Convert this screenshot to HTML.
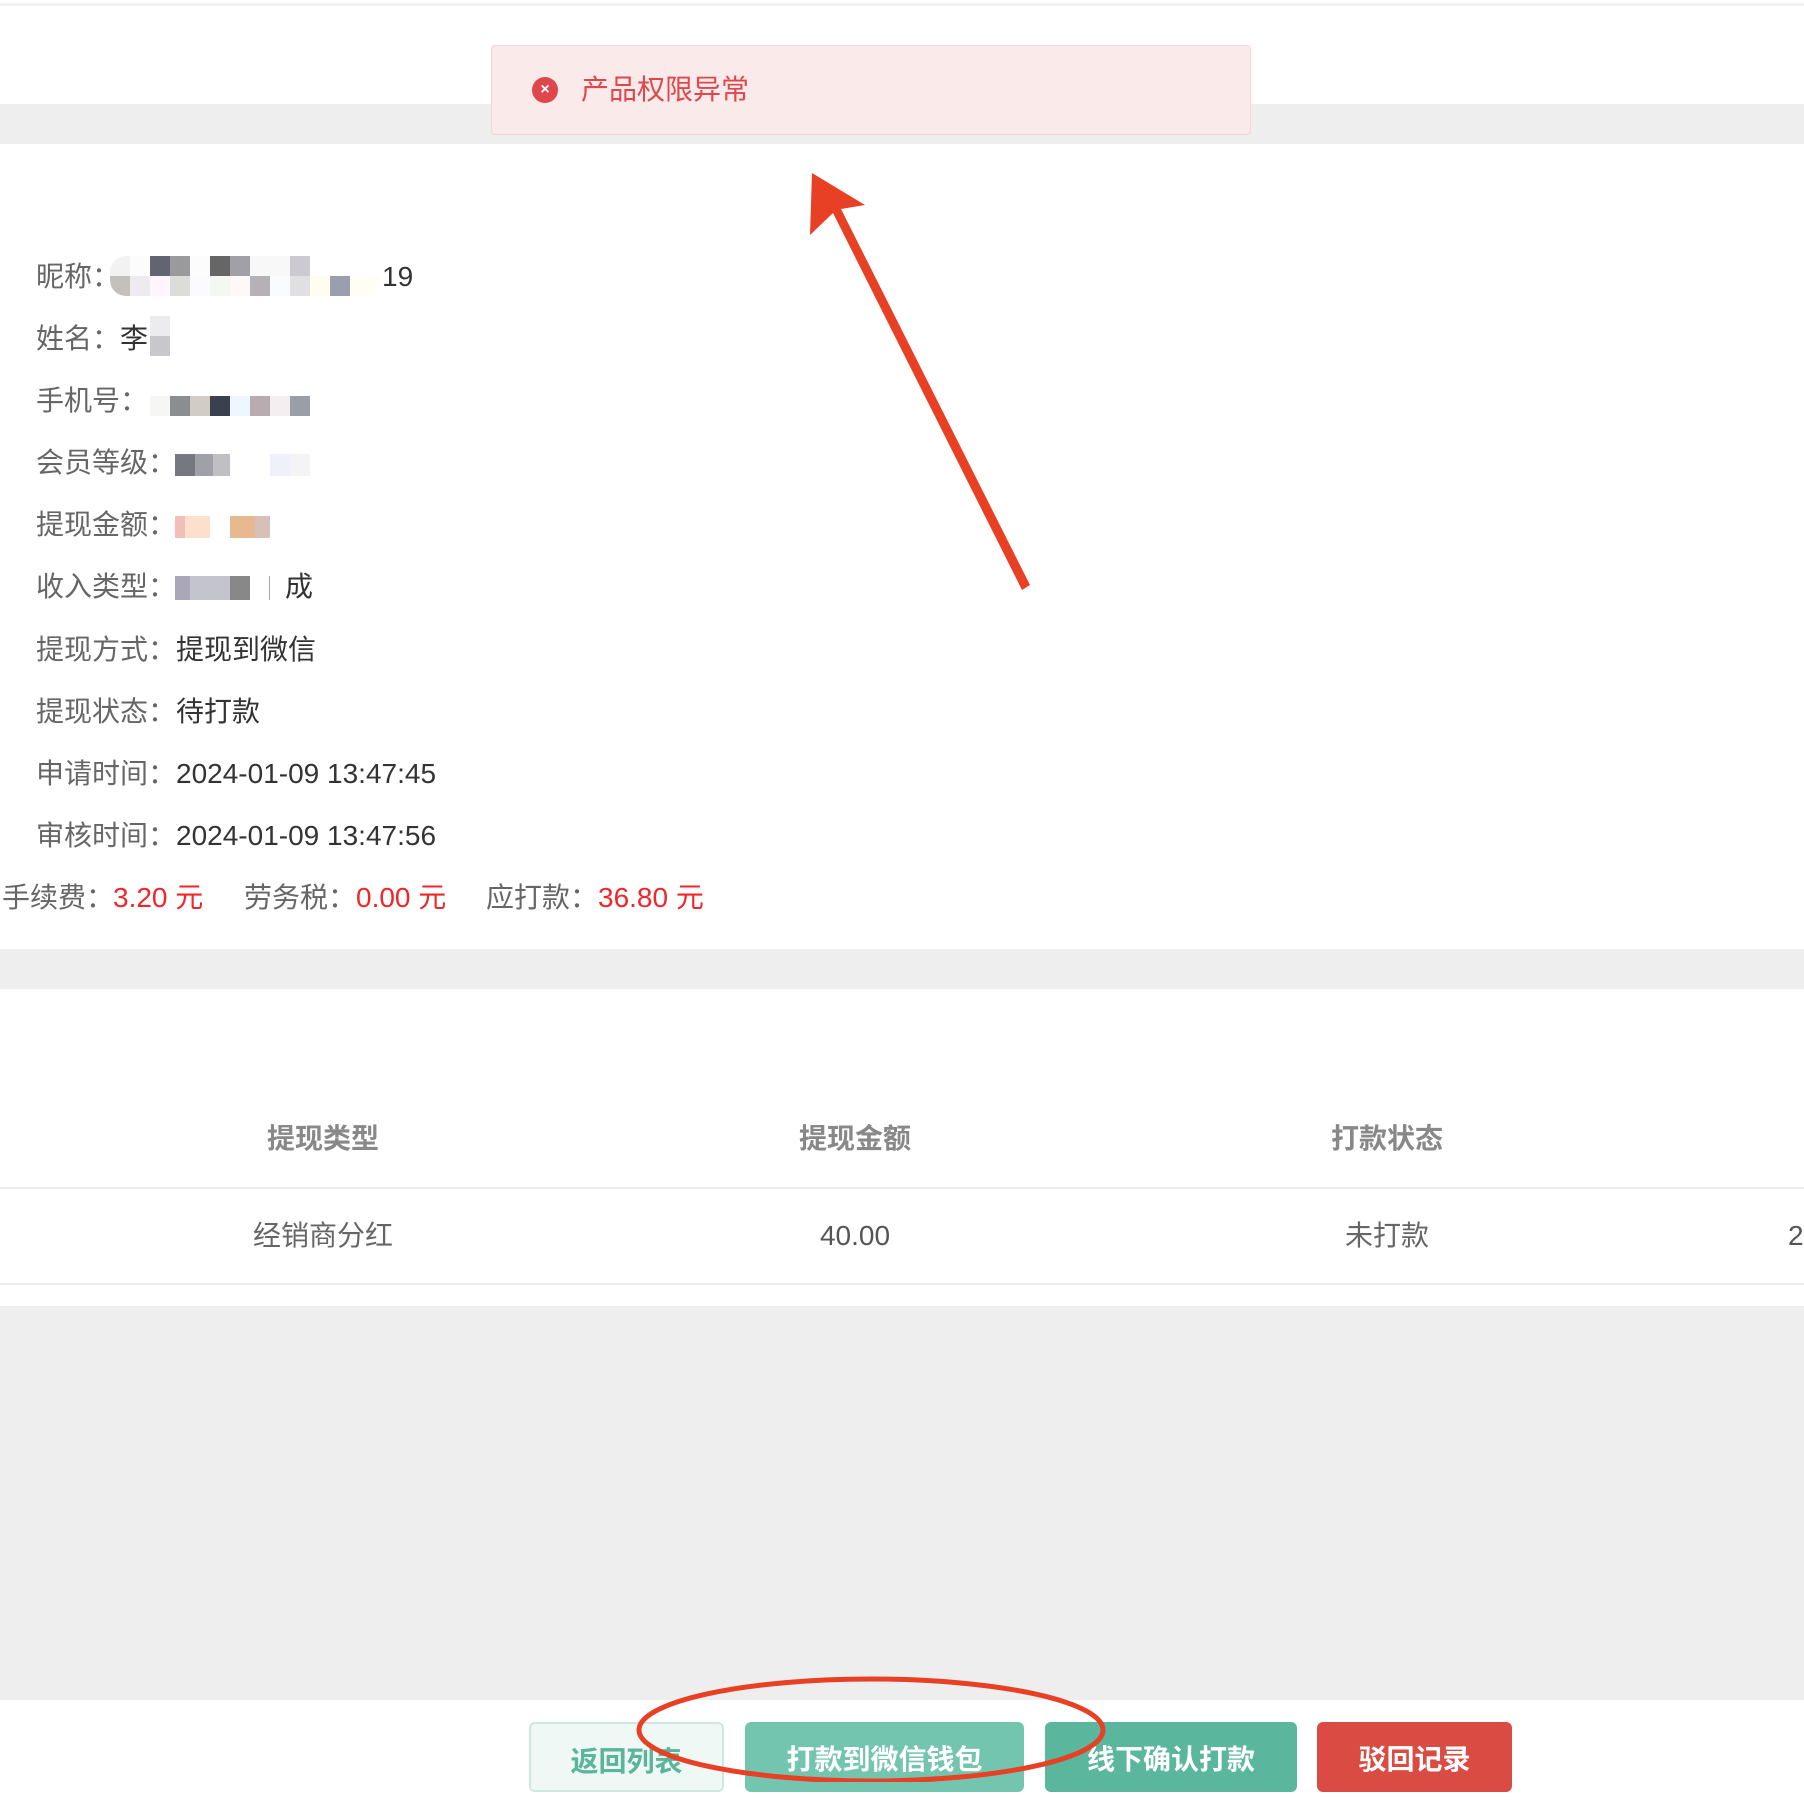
<!DOCTYPE html>
<html><head><meta charset="utf-8"><style>
*{margin:0;padding:0;box-sizing:border-box}
body{width:1804px;height:1782px;position:relative;overflow:hidden;background:#fff;font-family:"Liberation Sans","Noto Sans CJK SC",sans-serif;font-size:28px;line-height:28px;color:#333}
.a{position:absolute;white-space:nowrap}
.g{position:absolute;left:0;width:1804px;background:#eeeeee}
.lb{color:#666}
.red{color:#f0262a}
.th{color:#888;font-weight:bold}
.btn{position:absolute;top:1722px;height:70px;border-radius:6px;color:#fff;font-weight:bold;font-size:28px;text-align:center;line-height:76px}
</style></head><body>
<div class="g" style="top:3px;height:3px;background:#f2f2f2"></div>
<div class="g" style="top:104px;height:40px"></div>
<div class="a" style="left:491px;top:45px;width:760px;height:90px;background:#faeaea;border:1px solid #f3d5d6;border-radius:4px"></div>
<div class="a" style="left:532px;top:77px;width:26px;height:26px;border-radius:50%;background:#e0474c;color:#fff;font-size:16px;line-height:26px;text-align:center;font-weight:bold">×</div>
<div class="a" style="left:581px;top:76px;color:#e0474c">产品权限异常</div>

<div class="a lb" style="left:36px;top:263px">昵称：</div>
<div class="a" style="left:110px;top:256px;width:270px;height:40px;border-radius:16px;background:
linear-gradient(180deg,transparent 0 20px,#fff 20px),
linear-gradient(90deg,#f2f2f2 0 20px,#fcfcfc 20px 40px,#626472 40px 60px,#9a9a9c 60px 80px,#fcfcfc 80px 100px,#666 100px 120px,#a0a0a6 120px 140px,#f8f8f8 140px 180px,#cccad0 180px 200px,#fff 200px)"></div>
<div class="a" style="left:110px;top:276px;width:270px;height:20px;border-radius:0 0 16px 16px;background:linear-gradient(90deg,#c4c0bc 0 20px,#eeeaf0 20px 40px,#fef6fc 40px 60px,#dcdcda 60px 80px,#fafaff 80px 100px,#f4f8f4 100px 120px,#fef8f8 120px 140px,#b4b2b6 140px 160px,#f8fcff 160px 180px,#e0e0e2 180px 200px,#fffcf0 200px 220px,#9a9eae 220px 240px,#fefef4 240px)"></div>
<div class="a" style="left:382px;top:263px">19</div>

<div class="a lb" style="left:36px;top:325px">姓名：</div>
<div class="a" style="left:120px;top:325px">李</div>
<div class="a" style="left:150px;top:316px;width:20px;height:20px;background:#ececee"></div>
<div class="a" style="left:150px;top:336px;width:20px;height:20px;background:#c8c8cc"></div>

<div class="a lb" style="left:36px;top:387px">手机号：</div>
<div class="a" style="left:150px;top:396px;width:160px;height:20px;background:linear-gradient(90deg,#f6f6f4 0 20px,#8a8e90 20px 40px,#d2ccc4 40px 60px,#3b4050 60px 80px,#eef6ff 80px 100px,#b8acb0 100px 120px,#f4eef0 120px 140px,#9a9ea6 140px)"></div>

<div class="a lb" style="left:36px;top:449px">会员等级：</div>
<div class="a" style="left:175px;top:454px;width:135px;height:22px;background:linear-gradient(90deg,#757880 0 20px,#a0a0a8 20px 38px,#c0c0c4 38px 55px,#fff 55px 95px,#eef0fa 95px 115px,#f4f4f4 115px)"></div>
<div class="a lb" style="left:36px;top:511px">提现金额：</div>
<div class="a" style="left:175px;top:516px;width:105px;height:22px;background:linear-gradient(90deg,#f0c0b8 0 10px,#fde0cc 10px 35px,#fff 35px 55px,#e8b890 55px 80px,#d8c0b8 80px 95px,#fff 95px)"></div>
<div class="a lb" style="left:36px;top:573px">收入类型：</div>
<div class="a" style="left:175px;top:576px;width:95px;height:24px;background:linear-gradient(90deg,#aaa8b8 0 15px,#c4c4cc 15px 55px,#888 55px 75px,#fff 75px 94px,#aaa 94px)"></div>
<div class="a" style="left:285px;top:573px">成</div>
<div class="a lb" style="left:36px;top:636px">提现方式：<span style="color:#333">提现到微信</span></div>
<div class="a lb" style="left:36px;top:698px">提现状态：<span style="color:#333">待打款</span></div>
<div class="a lb" style="left:36px;top:760px">申请时间：<span style="color:#333">2024-01-09 13:47:45</span></div>
<div class="a lb" style="left:36px;top:822px">审核时间：<span style="color:#333">2024-01-09 13:47:56</span></div>
<div class="a lb" style="left:2px;top:884px">手续费：</div><div class="a red" style="left:113px;top:884px">3.20 元</div>
<div class="a lb" style="left:244px;top:884px">劳务税：</div><div class="a red" style="left:356px;top:884px">0.00 元</div>
<div class="a lb" style="left:486px;top:884px">应打款：</div><div class="a red" style="left:598px;top:884px">36.80 元</div>

<div class="g" style="top:949px;height:40px"></div>
<div class="a th" style="left:323px;top:1125px;transform:translateX(-50%)">提现类型</div>
<div class="a th" style="left:855px;top:1125px;transform:translateX(-50%)">提现金额</div>
<div class="a th" style="left:1387px;top:1125px;transform:translateX(-50%)">打款状态</div>
<div class="g" style="top:1187px;height:2px;background:#ececf0"></div>
<div class="a" style="left:323px;top:1222px;transform:translateX(-50%);color:#666">经销商分红</div>
<div class="a" style="left:855px;top:1222px;transform:translateX(-50%);color:#555">40.00</div>
<div class="a" style="left:1387px;top:1222px;transform:translateX(-50%);color:#666">未打款</div>
<div class="a" style="left:1788px;top:1222px;color:#555">2</div>
<div class="g" style="top:1283px;height:2px;background:#ececf0"></div>
<div class="g" style="top:1306px;height:394px"></div>

<div class="btn" style="left:529px;width:195px;background:#f0f8f5;border:2px solid #cde8df;color:#5ab59a">返回列表</div>
<div class="btn" style="left:745px;width:279px;background:#74c5b0">打款到微信钱包</div>
<div class="btn" style="left:1045px;width:252px;background:#5ab69c">线下确认打款</div>
<div class="btn" style="left:1317px;width:195px;background:#d94b43">驳回记录</div>

<svg class="a" style="left:0;top:0" width="1804" height="1782" viewBox="0 0 1804 1782">
<polygon points="812,173 865,205 841,209 1030,585 1022,590 833,213 810,235" fill="#e84025"/>
<ellipse cx="871" cy="1730" rx="232" ry="51" fill="none" stroke="#e84025" stroke-width="5"/>
</svg>
</body></html>
